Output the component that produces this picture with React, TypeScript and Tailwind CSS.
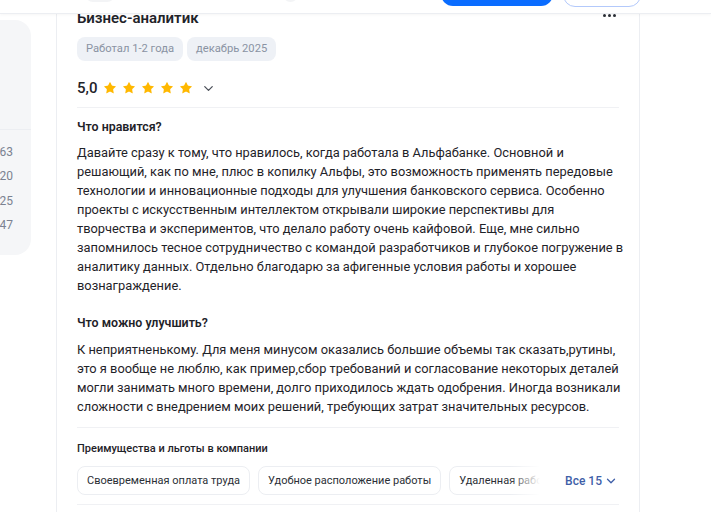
import React from 'react';
import { ChevronDown, Star } from 'lucide-react';

const likes = [
  'Давайте сразу к тому, что нравилось, когда работала в Альфабанке. Основной и',
  'решающий, как по мне, плюс в копилку Альфы, это возможность применять передовые',
  'технологии и инновационные подходы для улучшения банковского сервиса. Особенно',
  'проекты с искусственным интеллектом открывали широкие перспективы для',
  'творчества и экспериментов, что делало работу очень кайфовой. Еще, мне сильно',
  'запомнилось тесное сотрудничество с командой разработчиков и глубокое погружение в',
  'аналитику данных. Отдельно благодарю за афигенные условия работы и хорошее',
  'вознаграждение.',
];

const improve = [
  'К неприятненькому. Для меня минусом оказались большие объемы так сказать,рутины,',
  'это я вообще не люблю, как пример,сбор требований и согласование некоторых деталей',
  'могли занимать много времени, долго приходилось ждать одобрения. Иногда возникали',
  'сложности с внедрением моих решений, требующих затрат значительных ресурсов.',
];

const perks = ['Своевременная оплата труда', 'Удобное расположение работы', 'Удаленная работа'];

export default function App() {
  return (
    <div
      className="relative w-[711px] h-[512px] overflow-hidden bg-white text-[#1f2329]"
      style={{ fontFamily: 'Roboto, "Noto Sans", sans-serif' }}
    >
      {/* шапка поверх контента */}
      <div className="absolute left-0 top-0 z-10 h-[14px] w-full border-b border-[#eceef2] bg-white shadow-[0_1px_3px_rgba(0,0,0,0.04)]">
        <div className="absolute left-[85px] top-[-20px] h-[22px] w-[30px] rounded-lg bg-[#f3f4f6]" />
        <div className="absolute left-[283px] top-[-20px] h-[22px] w-[15px] rounded-lg bg-[#f3f4f6]" />
        <div className="absolute left-[441px] top-[-30px] h-[36px] w-[112px] rounded-xl bg-[#0a6cff]" />
        <div className="absolute left-[563px] top-[-30px] h-[37px] w-[78px] rounded-xl border border-[#b3c9fb] bg-white" />
      </div>

      <div className="flex h-full">
        {/* левая колонка */}
        <div className="w-[57px] shrink-0 border-r border-[#eceef2] pt-[20px]">
          <div className="h-[235px] w-[31px] rounded-r-2xl bg-[#f5f6f8]">
            <div className="h-[110px] border-b border-[#eceef2]" />
            <div className="flex flex-col items-end pr-[18px] pt-[10px] text-[12px] leading-[24.3px] text-[#7b8291]">
              <span>63</span>
              <span>20</span>
              <span>25</span>
              <span>47</span>
            </div>
          </div>
        </div>

        {/* отзыв */}
        <div className="w-[583px] shrink-0 border-r border-[#eceef2] px-5 pt-[6px]">
          <div className="flex items-start justify-between">
            <h2 className="text-[15px] font-semibold leading-[24px]">Бизнес-аналитик</h2>
            <div className="mr-[3px] mt-[8px] flex gap-[2px]">
              <span className="h-[3px] w-[3px] rounded-full bg-[#2b2f36]" />
              <span className="h-[3px] w-[3px] rounded-full bg-[#2b2f36]" />
              <span className="h-[3px] w-[3px] rounded-full bg-[#2b2f36]" />
            </div>
          </div>

          <div className="mt-[7px] flex gap-1">
            <span className="h-6 rounded-lg bg-[#eef1f6] px-[9px] text-[11.2px] leading-6 text-[#8a93a3]">Работал 1-2 года</span>
            <span className="h-6 rounded-lg bg-[#eef1f6] px-[9px] text-[11.2px] leading-6 text-[#8a93a3]">декабрь 2025</span>
          </div>

          <div className="mt-[15px] flex h-[24px] items-center">
            <span className="mr-[6px] text-[15px] font-medium">5,0</span>
            <div className="flex gap-[5px]">
              {[0, 1, 2, 3, 4].map((i) => (
                <Star key={i} size={14} fill="#ffb800" strokeWidth={0} />
              ))}
            </div>
            <ChevronDown size={15} className="ml-[8px] text-[#4a4f58]" strokeWidth={2} />
          </div>

          <div className="mt-[7px] border-t border-[#f0f1f4]" />

          <h3 className="mt-[9px] text-[12.4px] font-semibold leading-[19px]">Что нравится?</h3>
          <div className="mt-[7px] text-[12.85px] leading-[19px]">
            {likes.map((l) => (
              <div key={l} className="whitespace-nowrap">{l}</div>
            ))}
          </div>

          <h3 className="mt-[18px] text-[12.4px] font-semibold leading-[19px]">Что можно улучшить?</h3>
          <div className="mt-[8px] text-[12.85px] leading-[19px]">
            {improve.map((l) => (
              <div key={l} className="whitespace-nowrap">{l}</div>
            ))}
          </div>

          <div className="mt-[11px] border-t border-[#f0f1f4]" />

          <h4 className="mt-[12px] text-[11px] font-medium leading-[17px]">Преимущества и льготы в компании</h4>
          <div className="mt-[9px] flex items-center">
            <div className="relative flex w-[463px] gap-2 overflow-hidden">
              {perks.map((p) => (
                <span
                  key={p}
                  className="shrink-0 whitespace-nowrap rounded-lg border border-[#eceef2] px-[9px] text-[11px] leading-[27px] text-[#2b2f36]"
                >
                  {p}
                </span>
              ))}
              <div className="absolute right-0 top-0 h-full w-[30px] bg-gradient-to-r from-transparent to-white" />
            </div>
            <button className="ml-auto mr-[1px] flex items-center gap-[2px] text-[12px] font-medium text-[#3f5fa8]">
              Все 15
              <ChevronDown size={14} strokeWidth={2.2} />
            </button>
          </div>

          <div className="mt-[9px] border-t border-[#f0f1f4]" />
        </div>

        <div className="flex-1" />
      </div>
    </div>
  );
}
